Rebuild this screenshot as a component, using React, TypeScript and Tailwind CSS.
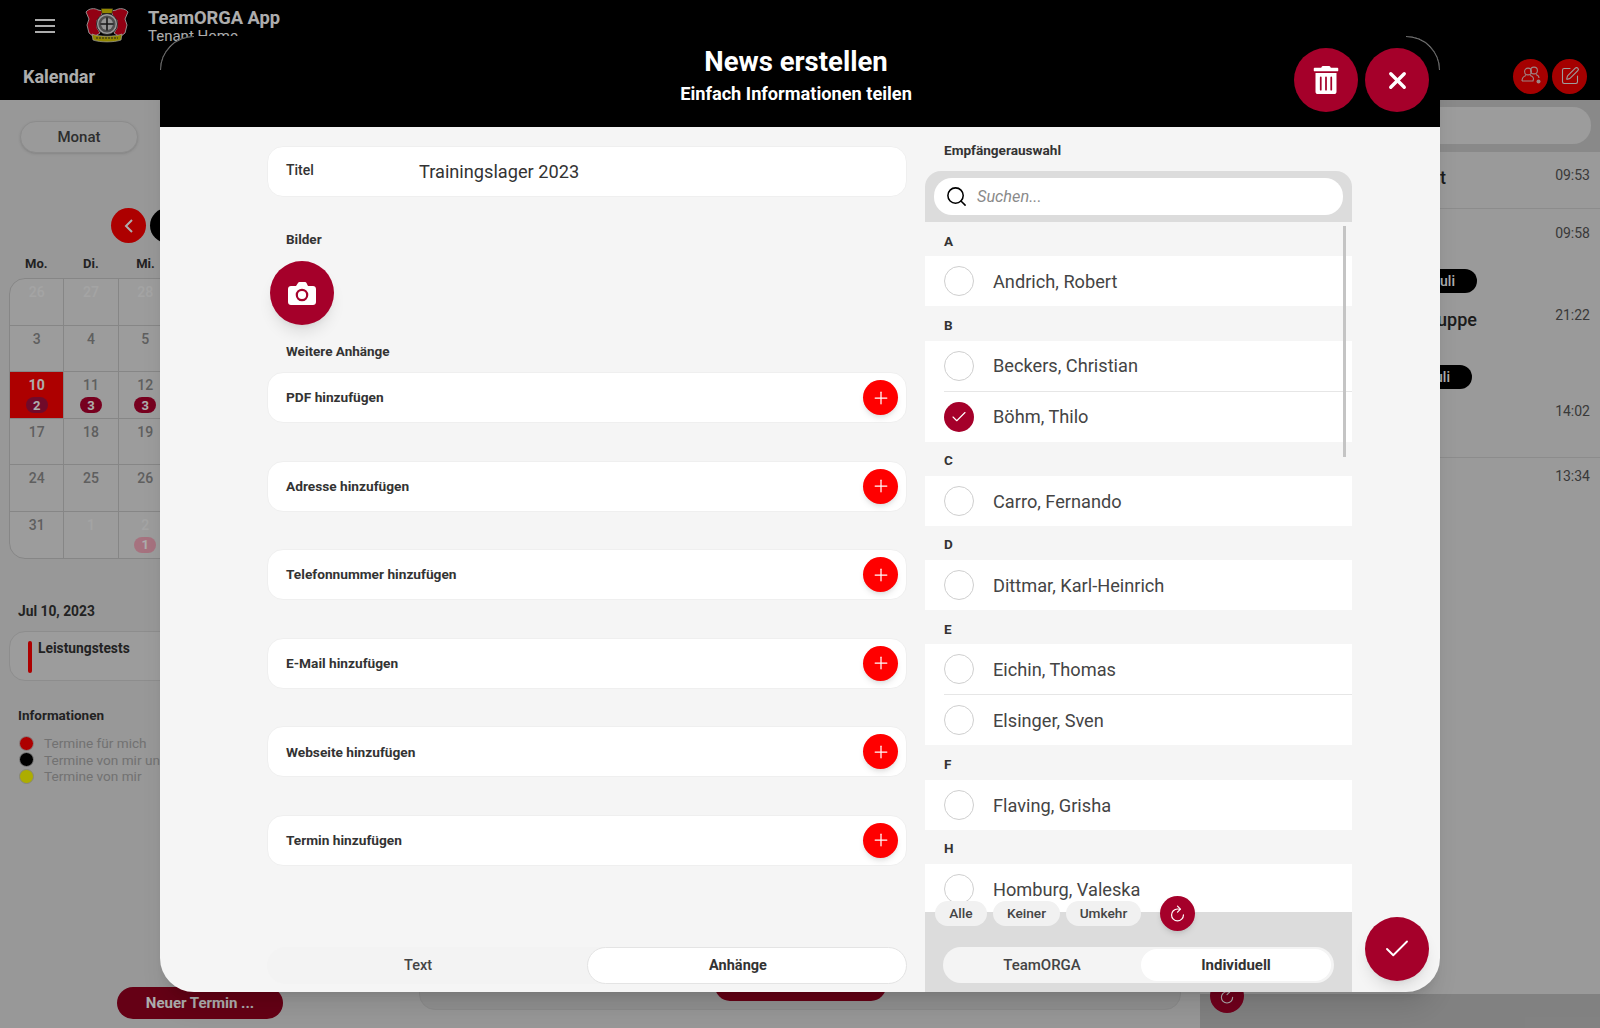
import React from 'react';
import { Check, Plus, Search, SquarePen, X } from 'lucide-react';
import { FaTrashAlt } from 'react-icons/fa';
import { IoRefreshOutline } from 'react-icons/io5';

const weeks = [
  [26, 27, 28],
  [3, 4, 5],
  [10, 11, 12],
  [17, 18, 19],
  [24, 25, 26],
  [31, 1, 2],
];

const badges: Record<string, number> = { '2-0': 2, '2-1': 3, '2-2': 3, '5-2': 1 };

const attachments = [
  'PDF hinzufügen',
  'Adresse hinzufügen',
  'Telefonnummer hinzufügen',
  'E-Mail hinzufügen',
  'Webseite hinzufügen',
  'Termin hinzufügen',
];

const recipients = [
  { letter: 'A', names: ['Andrich, Robert'] },
  { letter: 'B', names: ['Beckers, Christian', 'Böhm, Thilo'] },
  { letter: 'C', names: ['Carro, Fernando'] },
  { letter: 'D', names: ['Dittmar, Karl-Heinrich'] },
  { letter: 'E', names: ['Eichin, Thomas', 'Elsinger, Sven'] },
  { letter: 'F', names: ['Flaving, Grisha'] },
  { letter: 'H', names: ['Homburg, Valeska'] },
];

const legend = [
  { color: 'bg-[#ff0000]', label: 'Termine für mich' },
  { color: 'bg-black', label: 'Termine von mir und anderen' },
  { color: 'bg-[#ffff00]', label: 'Termine von mir' },
];

const Crest = () => (
  <svg width="46" height="36" viewBox="0 0 46 36">
    {/* lions */}
    <path
      d="M2 5 C5 1 11 1 14 3 L19 4 L17 9 L13 13 L13 21 L16 26 L10 30 L5 26 L3 18 L5 12 Z"
      fill="#d8001c"
      stroke="#e8e8e8"
      strokeWidth="0.9"
    />
    <path
      d="M44 5 C41 1 35 1 32 3 L27 4 L29 9 L33 13 L33 21 L30 26 L36 30 L41 26 L43 18 L41 12 Z"
      fill="#d8001c"
      stroke="#e8e8e8"
      strokeWidth="0.9"
    />
    {/* crown and ribbon */}
    <path d="M17 1.5 H29 L28 6.5 H18 Z" fill="#d8c800" stroke="#222" strokeWidth="0.5" />
    <path d="M8 27 C15 30 31 30 38 27 L37 33 C30 35.5 16 35.5 9 33 Z" fill="#d8c800" stroke="#e8e8e8" strokeWidth="0.7" />
    <path d="M12 31 H34" stroke="#333" strokeWidth="1" strokeDasharray="2 1" />
    {/* centre */}
    <circle cx="23" cy="17" r="10.5" fill="#e4e4e4" stroke="#222" strokeWidth="0.8" />
    <circle cx="23" cy="17" r="8.6" fill="#777" />
    <circle cx="23" cy="17" r="6" fill="#dcdcdc" />
    <path d="M16.5 17 H29.5 M23 10.5 V23.5" stroke="#222" strokeWidth="1.6" />
  </svg>
);

const CameraIcon = () => (
  <svg width="28" height="23" viewBox="0 0 28 23">
    <path
      d="M3 4 H8 L10 1 C10.3 0.4 10.8 0 11.5 0 H17 C17.7 0 18.2 0.4 18.5 1 L20 4 H25 C26.7 4 28 5.3 28 7 V20 C28 21.7 26.7 23 25 23 H3 C1.3 23 0 21.7 0 20 V7 C0 5.3 1.3 4 3 4 Z"
      fill="#fff"
    />
    <circle cx="14" cy="13" r="5.2" fill="#fff" stroke="#a5002a" strokeWidth="2.2" />
  </svg>
);

const GroupIcon = () => (
  <svg width="22" height="20" viewBox="0 0 22 20" fill="none" stroke="#e8e8e8" strokeWidth="1.1" opacity="0.85">
    <circle cx="8" cy="5.5" r="3.4" />
    <circle cx="14" cy="4.5" r="3.4" />
    <path d="M2 15 C2 11.5 4.5 10 6 9.5 M10 9.5 C12 10 13.5 11.5 13.5 13 L13 15 H2" />
    <path d="M16 8.5 C17.5 9 19 10.5 19 12" />
    <circle cx="18.5" cy="15.5" r="2" fill="#e8e8e8" stroke="none" />
  </svg>
);

const Sidebar = () => (
  <div className="flex h-full w-[400px] flex-col">
    <div className="ml-[20px] mt-[21px] flex h-[32px] w-[118px] items-center justify-center rounded-full border border-[#cfcfcf] bg-[#e4e4e4] text-[15px] font-medium text-[#444] shadow">
      Monat
    </div>
    <div className="ml-[111px] mt-[55px] flex h-[35px] gap-[4px]">
      <div className="flex h-[35px] w-[35px] items-center justify-center rounded-full bg-[#ff0000] text-white">
        <svg width="12" height="16" viewBox="0 0 12 16" fill="none" stroke="#fff" strokeWidth="2">
          <path d="M9 2 L3 8 L9 14" />
        </svg>
      </div>
      <div className="h-[35px] w-[35px] rounded-full bg-black" />
    </div>
    <div className="ml-[9px] mt-[13px] grid h-[16px] w-[382px] grid-cols-7 text-center text-[13px] font-bold leading-[16px] text-[#333]">
      {['Mo.', 'Di.', 'Mi.'].map((d) => (
        <div key={d}>{d}</div>
      ))}
    </div>
    <div className="ml-[9px] mt-[6px] grid h-[281px] w-[382px] grid-cols-7 grid-rows-6 overflow-hidden rounded-[16px] border border-[#c6c6c6] bg-[#e6e6e6]">
      {weeks.flatMap((week, r) =>
        [0, 1, 2, 3, 4, 5, 6].map((c) => {
          const day = week[c];
          const faint = (r === 0 && c < 5) || (r === 5 && c > 0);
          const today = r === 2 && c === 0;
          const badge = badges[`${r}-${c}`];
          return (
            <div
              key={`${r}-${c}`}
              className={`flex flex-col items-center border-[#c6c6c6] pt-[4px] text-[14px] leading-[18px] ${
                c < 6 ? 'border-r' : ''
              } ${r < 5 ? 'border-b' : ''} ${today ? 'bg-[#ff0000] font-bold text-white' : faint ? 'font-medium text-[#f2f2f2]' : 'font-medium text-[#8c8c8c]'}`}
            >
              <span>{day}</span>
              {badge ? (
                <span
                  className={`mt-[3px] flex h-[16px] w-[22px] items-center justify-center rounded-full text-[13px] font-bold leading-none text-white ${
                    faint ? 'bg-[#f5a9bb]' : today ? 'bg-[#a5103f]' : 'bg-[#b0002e]'
                  }`}
                >
                  {badge}
                </span>
              ) : null}
            </div>
          );
        }),
      )}
    </div>
    <div className="ml-[18px] mt-[44px] h-[16px] text-[13.8px] font-bold leading-[16px] text-[#333]">Jul 10, 2023</div>
    <div className="ml-[9px] mt-[12px] flex h-[50px] w-[382px] gap-[6px] rounded-[16px] border border-[#d0d0d0] bg-[#e6e6e6] pl-[18px] pt-[8px]">
      <div className="mt-[1px] h-[32px] w-[4px] rounded-full bg-[#ff0000]" />
      <div className="text-[13.8px] font-bold leading-[16px] text-[#333]">Leistungstests</div>
    </div>
    <div className="ml-[18px] mt-[26px] h-[16px] text-[13.5px] font-bold leading-[16px] text-[#333]">Informationen</div>
    <div className="ml-[19px] mt-[12px] flex flex-col">
      {legend.map((item) => (
        <div key={item.label} className="flex h-[16.5px] items-center gap-[10px] text-[13.6px] text-[#a8a8a8]">
          <span className={`h-[15px] w-[15px] rounded-full border border-[#c4c4c4] ${item.color}`} />
          {item.label}
        </div>
      ))}
    </div>
    <div className="mb-[9px] ml-[117px] mt-auto flex h-[32px] w-[166px] items-center justify-center rounded-full bg-[#950020] text-[15px] font-bold text-white">
      Neuer Termin ...
    </div>
  </div>
);

const CenterPane = () => (
  <div className="flex h-full w-[800px] flex-col justify-end bg-[#dfdfdf] px-[19px] pb-[18px]">
    <div className="flex h-[60px] justify-center rounded-b-[16px] border border-[#cdcdcd] bg-[#d4d4d4] pb-[10px] pt-[20px]">
      <div className="h-[30px] w-[171px] rounded-full bg-[#950020]" />
    </div>
  </div>
);

const Time = ({ children }: { children: React.ReactNode }) => (
  <span className="text-[14px] leading-[20px] text-[#555]">{children}</span>
);

const pane = 'flex justify-between pr-[10px]';
const nameCol = 'flex w-[277px] justify-end';
const pill = 'flex h-[24px] items-center rounded-full bg-black pl-[40px] pr-[22px] text-[14px] font-medium text-white';

const RightPane = () => (
  <div className="flex h-full w-[400px] flex-col bg-[#e3e3e3]">
    <div className="h-[52px] shrink-0 bg-[#cbcbcb] px-[9px] pt-[7px]">
      <div className="h-[37px] w-full rounded-[18px] bg-[#e6e6e6]" />
    </div>
    <div className={`${pane} h-[57px] border-b border-[#cfcfcf] pt-[13px]`}>
      <div className={nameCol}>
        <span className="pr-[31px] text-[18px] font-medium leading-[26px] text-[#2a2a2a]">Test</span>
      </div>
      <Time>09:53</Time>
    </div>
    <div className={`${pane} h-[48px] pt-[14px]`}>
      <div className={nameCol} />
      <Time>09:58</Time>
    </div>
    <div className={`${pane} h-[48px] items-center`}>
      <div className={nameCol}>
        <span className={pill}>Juli</span>
      </div>
    </div>
    <div className={`${pane} h-[30px]`}>
      <div className={nameCol}>
        <span className="text-[18px] font-medium leading-[30px] text-[#2a2a2a]">Gruppe</span>
      </div>
      <Time>21:22</Time>
    </div>
    <div className={`${pane} mt-[20px] h-[44px] items-center`}>
      <div className={nameCol}>
        <span className={`${pill} mr-[5px]`}>Juli</span>
      </div>
    </div>
    <div className={`${pane} h-[59px] border-b border-[#cfcfcf] pt-[2px]`}>
      <div className={nameCol} />
      <Time>14:02</Time>
    </div>
    <div className={`${pane} h-[36px] items-center`}>
      <div className={nameCol} />
      <Time>13:34</Time>
    </div>
    <div className="mt-auto h-[34px] bg-[#bfbfbf] pl-[10px]">
      <div className="-mt-[15px] flex h-[34px] w-[34px] items-center justify-center rounded-full bg-[#a5002a] text-white">
        <IoRefreshOutline size={18} />
      </div>
    </div>
  </div>
);

const Corner = ({ side }: { side: 'left' | 'right' }) => (
  <div
    className={`absolute top-0 h-[34px] w-[34px] border-t border-[#777] ${
      side === 'left' ? 'left-0 rounded-tl-[34px] border-l' : 'right-0 rounded-tr-[34px] border-r'
    }`}
  />
);

const Modal = () => (
  <div className="absolute left-[160px] top-[36px] flex h-[956px] w-[1280px] flex-col overflow-hidden rounded-[34px] bg-[#f5f5f5] shadow-xl">
    {/* Kopfbereich */}
    <div className="relative flex h-[91px] shrink-0 flex-col items-center bg-black pr-[8px] pt-[7px] text-white">
      <Corner side="left" />
      <Corner side="right" />
      <div className="text-[27.5px] font-bold leading-[38px]">News erstellen</div>
      <div className="mt-[2px] text-[18.2px] font-bold leading-[22px]">Einfach Informationen teilen</div>
      <div className="absolute right-[11px] top-[12px] flex gap-[7px]">
        <div className="flex h-[64px] w-[64px] items-center justify-center rounded-full bg-[#a5002a]">
          <FaTrashAlt size={28} />
        </div>
        <div className="flex h-[64px] w-[64px] items-center justify-center rounded-full bg-[#a5002a]">
          <X size={27} strokeWidth={3} />
        </div>
      </div>
    </div>

    <div className="relative flex min-h-0 flex-1 pl-[107px]">
      {/* Linke Spalte */}
      <div className="flex w-[640px] flex-col pb-[8px] pt-[19px]">
        <div className="flex h-[51px] items-center rounded-[16px] border border-[#efefef] bg-white pl-[18px]">
          <span className="-mt-[3px] w-[133px] text-[14px] font-medium text-[#333]">Titel</span>
          <span className="text-[18.2px] text-[#333]">Trainingslager 2023</span>
        </div>
        <div className="ml-[19px] mt-[34px] h-[16px] text-[13.5px] font-bold leading-[16px] text-[#333]">Bilder</div>
        <div className="ml-[3px] mt-[14px] flex h-[64px] w-[64px] items-center justify-center rounded-full bg-[#a5002a] shadow-lg">
          <CameraIcon />
        </div>
        <div className="ml-[19px] mt-[18px] h-[16px] text-[13.5px] font-bold leading-[16px] text-[#333]">Weitere Anhänge</div>
        <div className="mt-[13px] flex flex-col gap-[37.6px]">
          {attachments.map((label) => (
            <div key={label} className="flex h-[51px] items-center justify-between rounded-[16px] border border-[#efefef] bg-white pl-[18px] pr-[8px]">
              <span className="text-[13.7px] font-bold text-[#333]">{label}</span>
              <span className="flex h-[35px] w-[35px] items-center justify-center rounded-full bg-[#ff0000] text-white shadow-md">
                <Plus size={20} strokeWidth={1.5} />
              </span>
            </div>
          ))}
        </div>
        <div className="mt-auto flex h-[37px] rounded-full bg-[#f3f3f3] text-[14.5px]">
          <div className="flex w-1/2 items-center justify-center pr-[18px] font-medium text-[#444]">Text</div>
          <div className="flex w-1/2 items-center justify-center rounded-full border border-[#e4e4e4] bg-white pr-[18px] font-bold text-[#333]">Anhänge</div>
        </div>
      </div>

      {/* Empfänger */}
      <div className="ml-[18px] flex w-[427px] flex-col pt-[15px]">
        <div className="ml-[19px] h-[16px] text-[13.6px] font-bold leading-[16px] text-[#333]">Empfängerauswahl</div>
        <div className="relative mt-[13px] flex min-h-0 flex-1 flex-col overflow-hidden rounded-t-[16px]">
          <div className="h-[51px] shrink-0 bg-[#dcdcdc] px-[9px] pt-[7px]">
            <div className="flex h-[37px] items-center gap-[9px] rounded-[18px] bg-white pl-[11px]">
              <Search size={23} strokeWidth={1.6} className="text-black" />
              <span className="mt-[2px] text-[16.3px] italic text-[#8a8a8a]">Suchen...</span>
            </div>
          </div>
          <div className="relative h-[690px] shrink-0 overflow-hidden bg-white">
            {recipients.map((group) => (
              <div key={group.letter}>
                <div className="flex h-[34.3px] items-center bg-[#f5f5f5] pl-[19px] pt-[3px] text-[13.5px] font-bold text-[#333]">{group.letter}</div>
                {group.names.map((name, i) => (
                  <div key={name}>
                    {i > 0 ? <div className="ml-[19px] h-px bg-[#e6e6e6]" /> : null}
                    <div className="flex h-[50px] items-center gap-[19px] pl-[19px] text-[18.2px] text-[#444]">
                      {name === 'Böhm, Thilo' ? (
                        <span className="flex h-[30px] w-[30px] items-center justify-center rounded-full bg-[#a5002a] text-white">
                          <Check size={18} strokeWidth={1.5} />
                        </span>
                      ) : (
                        <span className="h-[30px] w-[30px] rounded-full border border-[#cfcfcf] bg-white" />
                      )}
                      <span className="pt-[1px]">{name}</span>
                    </div>
                  </div>
                ))}
              </div>
            ))}
            <div className="absolute right-[6px] top-[4px] h-[231px] w-[3px] bg-[#c4c4c4]" />
          </div>
          <div className="relative flex-1 bg-[#dcdcdc]">
            <div className="absolute -top-[16px] left-[10px] flex items-center gap-[6px] text-[13.7px] font-medium text-[#444]">
              <div className="flex h-[25px] w-[52px] items-center justify-center rounded-full bg-[#f1f1f1]">Alle</div>
              <div className="flex h-[25px] w-[67px] items-center justify-center rounded-full bg-[#f1f1f1]">Keiner</div>
              <div className="flex h-[25px] w-[75px] items-center justify-center rounded-full bg-[#f1f1f1]">Umkehr</div>
              <div className="ml-[13px] flex h-[35px] w-[35px] items-center justify-center rounded-full bg-[#a5002a] text-white shadow-md">
                <IoRefreshOutline size={19} />
              </div>
            </div>
            <div className="mx-[18px] mt-[35px] flex h-[36px] items-center rounded-full bg-[#f4f4f4] pr-[3px] text-[15px] text-[#444]">
              <div className="flex w-[198px] items-center justify-center font-medium">TeamORGA</div>
              <div className="flex h-[32px] flex-1 items-center justify-center rounded-full bg-white font-bold text-[#333]">Individuell</div>
            </div>
          </div>
        </div>
      </div>

      <div className="absolute bottom-[11px] right-[11px] flex h-[64px] w-[64px] items-center justify-center rounded-full bg-[#a5002a] text-white shadow-lg">
        <Check size={30} strokeWidth={1.5} />
      </div>
    </div>
  </div>
);

export default function App() {
  return (
    <div className="relative h-[1028px] w-[1600px] overflow-hidden bg-[#e0e0e0] font-[family-name:Roboto,sans-serif]">
      <div className="h-[100px] bg-black text-white">
        <div className="flex h-[50px] pl-[35px]">
          <svg width="20" height="14" viewBox="0 0 20 14" className="mt-[19px]" fill="#fff">
            <rect y="0" width="20" height="2" />
            <rect y="6" width="20" height="2" />
            <rect y="12" width="20" height="2" />
          </svg>
          <div className="ml-[29px] mt-[7px]">
            <Crest />
          </div>
          <div className="ml-[18px] mt-[7px]">
            <div className="text-[18.3px] font-bold leading-[21px]">TeamORGA App</div>
            <div className="text-[15px] leading-[17px]">Tenant Home</div>
          </div>
        </div>
        <div className="flex h-[50px] items-center justify-between pl-[23px] pr-[13px]">
          <span className="mt-[2px] text-[18px] font-bold">Kalendar</span>
          <div className="mt-[2px] flex gap-[4px]">
            <div className="flex h-[35px] w-[35px] items-center justify-center rounded-full bg-[#f40000]">
              <GroupIcon />
            </div>
            <div className="flex h-[35px] w-[35px] items-center justify-center rounded-full bg-[#f40000]">
              <SquarePen size={20} strokeWidth={1.3} className="text-[#e8e8e8]" />
            </div>
          </div>
        </div>
      </div>
      <div className="flex h-[928px]">
        <Sidebar />
        <CenterPane />
        <RightPane />
      </div>
      <div className="absolute inset-0 bg-black/[0.32]" />
      <Modal />
    </div>
  );
}
